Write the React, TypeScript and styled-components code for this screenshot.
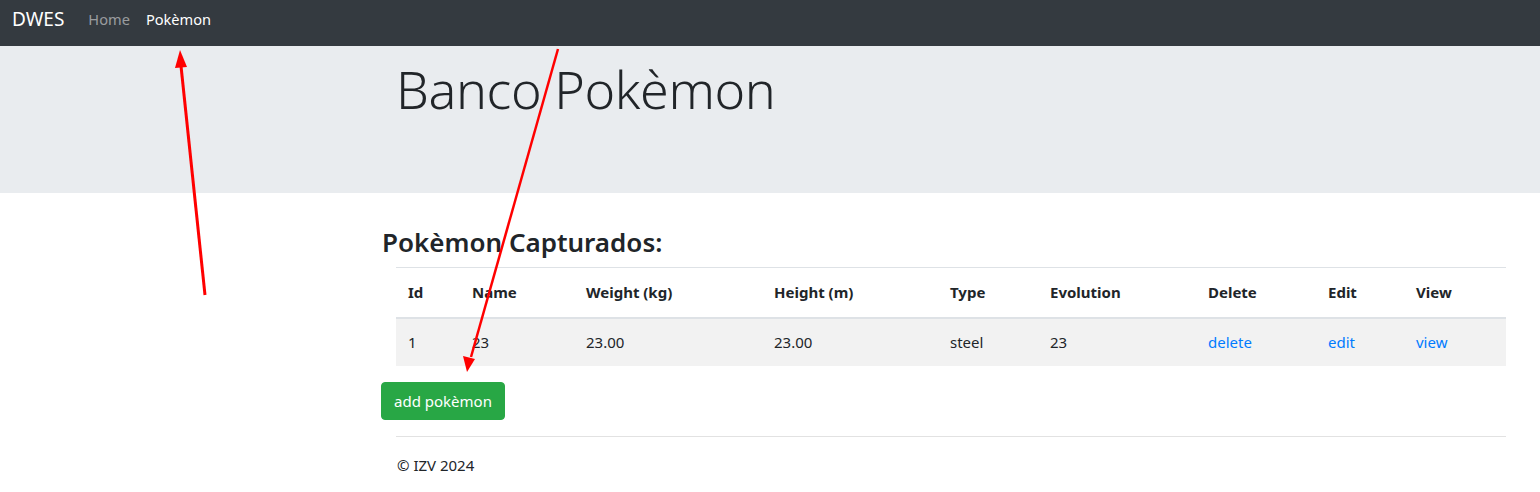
import React from "react";
import styled, { createGlobalStyle } from "styled-components";

const Global = createGlobalStyle`
  html, body { margin: 0; padding: 0; background: #fff; }
  body {
    font-family: "Noto Sans", "Open Sans", sans-serif;
    font-size: 16px;
    line-height: 1.5;
    color: #212529;
  }
  * { box-sizing: border-box; }
`;

const Page = styled.div`
  position: relative;
  width: 1540px;
  height: 492px;
  overflow: hidden;
`;

const Navbar = styled.nav`
  display: flex;
  align-items: center;
  height: 46px;
  padding: 0 12px 9px;
  background: #343a40;
  line-height: 24px;
`;

const Brand = styled.a`
  font-size: 19px;
  color: #fff;
  margin-right: 16px;
  text-decoration: none;
`;

const NavLink = styled.a<{ $active?: boolean }>`
  padding: 0 8px;
  font-size: 14.6px;
  color: ${(p) => (p.$active ? "#fff" : "rgba(255,255,255,.5)")};
  text-decoration: none;
`;

const Jumbotron = styled.header`
  height: 147px;
  background: #e9ecef;
  padding: 12px 0 0 396px;
`;

const Title = styled.h1`
  margin: 0;
  font-size: 52px;
  font-weight: 300;
  line-height: 1.2;
  letter-spacing: -0.4px;
`;

const Main = styled.main`
  width: 1125px;
  margin-left: 381px;
  padding-top: 34px;
`;

const Heading = styled.h2`
  margin: 0 0 9px 1px;
  font-size: 26px;
  font-weight: 600;
  line-height: 1.2;
`;

const Table = styled.table`
  margin-left: 15px;
  width: 1110px;
  border-collapse: collapse;
  font-size: 15px;
`;

const Th = styled.th<{ $w: number }>`
  width: ${(p) => p.$w}px;
  text-align: left;
  font-weight: 700;
  padding: 12px;
  height: 50px;
  border-top: 1px solid #dee2e6;
  border-bottom: 2px solid #dee2e6;
`;

const Row = styled.tr`
  background: #f2f2f2;
`;

const Td = styled.td`
  padding: 12px;
  height: 48px;
`;

const Link = styled.a`
  color: #007bff;
  text-decoration: none;
`;

const Button = styled.button`
  margin-top: 16px;
  height: 38px;
  padding: 0 12px;
  border: 1px solid #28a745;
  border-radius: 4px;
  background: #28a745;
  color: #fff;
  font-family: inherit;
  font-size: 15px;
`;

const Footer = styled.footer`
  margin: 16px 0 0 15px;
  border-top: 1px solid #e2e2e2;
  padding-top: 17px;
  font-size: 15px;
  padding-left: 1px;
`;

const Overlay = styled.svg`
  position: absolute;
  left: 0;
  top: 0;
  pointer-events: none;
`;

const cols: [string, number][] = [
  ["Id", 64],
  ["Name", 114],
  ["Weight (kg)", 188],
  ["Height (m)", 176],
  ["Type", 100],
  ["Evolution", 158],
  ["Delete", 120],
  ["Edit", 88],
  ["View", 102],
];

export default function App() {
  return (
    <Page>
      <Global />
      <Navbar>
        <Brand>DWES</Brand>
        <NavLink>Home</NavLink>
        <NavLink $active>Pokèmon</NavLink>
      </Navbar>
      <Jumbotron>
        <Title>Banco Pokèmon</Title>
      </Jumbotron>
      <Main>
        <Heading>Pokèmon Capturados:</Heading>
        <Table>
          <thead>
            <tr>
              {cols.map(([c, w]) => (
                <Th key={c} $w={w}>
                  {c}
                </Th>
              ))}
            </tr>
          </thead>
          <tbody>
            <Row>
              <Td>1</Td>
              <Td>23</Td>
              <Td>23.00</Td>
              <Td>23.00</Td>
              <Td>steel</Td>
              <Td>23</Td>
              <Td>
                <Link>delete</Link>
              </Td>
              <Td>
                <Link>edit</Link>
              </Td>
              <Td>
                <Link>view</Link>
              </Td>
            </Row>
          </tbody>
        </Table>
        <Button>add pokèmon</Button>
        <Footer>© IZV 2024</Footer>
      </Main>
      <Overlay width="1540" height="492">
        <line x1="205" y1="295" x2="181" y2="66" stroke="#ff0000" strokeWidth="3" />
        <polygon points="180,50 175,68 187,67" fill="#ff0000" />
        <line x1="558" y1="49" x2="471" y2="357" stroke="#ff0000" strokeWidth="2.5" />
        <polygon points="467,372 463,356 475,359" fill="#ff0000" />
      </Overlay>
    </Page>
  );
}
